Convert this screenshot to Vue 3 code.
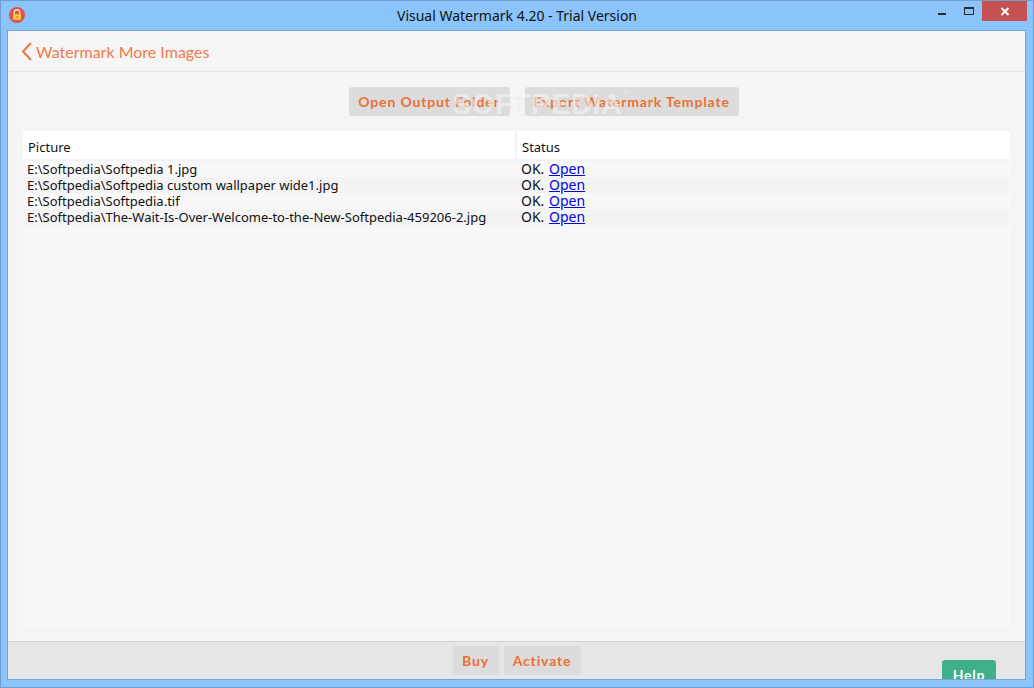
<script setup>
const rows = [
  'E:\\Softpedia\\Softpedia 1.jpg',
  'E:\\Softpedia\\Softpedia custom wallpaper wide1.jpg',
  'E:\\Softpedia\\Softpedia.tif',
  'E:\\Softpedia\\The-Wait-Is-Over-Welcome-to-the-New-Softpedia-459206-2.jpg',
]
</script>

<template>
  <div class="window">
    <div class="titlebar">
      <svg class="appicon" width="16" height="16" viewBox="0 0 16 16">
        <circle cx="8" cy="8" r="8" fill="#e2504f" />
        <path d="M5.2 7.5V5.6a2.8 2.8 0 0 1 5.6 0v1.9" fill="none" stroke="#f5e3b0" stroke-width="1.4" />
        <rect x="4" y="7.2" width="8" height="5.6" fill="#f6c945" />
        <rect x="7.4" y="9" width="1.2" height="2" fill="#b98a20" />
      </svg>
      <div class="title">Visual Watermark 4.20 - Trial Version</div>
      <div class="controls">
        <div class="ctl"><span class="min"></span></div>
        <div class="ctl"><span class="max"></span></div>
        <div class="close">
          <svg width="10" height="9" viewBox="0 0 10 9">
            <path d="M1.5 1l7 7M8.5 1l-7 7" stroke="#fff" stroke-width="2" fill="none" />
          </svg>
        </div>
      </div>
    </div>
    <div class="client">
      <div class="head">
        <svg width="11" height="19" viewBox="0 0 11 19">
          <path d="M10 1L2 9.5 10 18" fill="none" stroke="#ef7440" stroke-width="2" />
        </svg>
        <span class="back">Watermark More Images</span>
      </div>
      <div class="main">
        <div class="actions">
          <button class="btn big wide1">Open Output Folder</button>
          <button class="btn big wide2">Export Watermark Template</button>
          <div class="mark">SOFTPEDIA<sup>®</sup></div>
        </div>
        <div class="panel">
          <div class="thead">
            <div class="c1">Picture</div>
            <div class="c2">Status</div>
          </div>
          <div v-for="(r, i) in rows" :key="r" class="row" :class="{ alt: i % 2 === 1 }">
            <div class="p">{{ r }}</div>
            <div class="s">OK. <a href="#">Open</a></div>
          </div>
        </div>
      </div>
      <div class="foot">
        <button class="btn small b1">Buy</button>
        <button class="btn small b2">Activate</button>
        <div class="help">Help</div>
      </div>
    </div>
  </div>
</template>

<style>
html, body { margin: 0; overflow: hidden; }
</style>

<style scoped>
.window {
  box-sizing: border-box;
  width: 1034px;
  height: 688px;
  background: #8ac4fa;
  border: 1px solid #6f9fd0;
  display: flex;
  flex-direction: column;
  font-family: "Noto Sans", "Open Sans", sans-serif;
  overflow: hidden;
}
.titlebar {
  height: 29px;
  flex: none;
  display: flex;
  align-items: center;
  position: relative;
  box-sizing: border-box;
}
.appicon { margin: -1px 0 0 8px; }
.title {
  position: absolute;
  left: 0;
  right: 0;
  top: 5px;
  text-align: center;
  font: 14px/20px "Noto Sans", sans-serif;
  color: #111;
}
.controls {
  margin-left: auto;
  display: flex;
  align-self: flex-start;
  margin-right: 0;
}
.ctl { width: 30px; height: 20px; position: relative; }
.min { position: absolute; left: 16px; top: 12px; width: 8px; height: 2px; background: #2b2b2b; }
.max { position: absolute; left: 12px; top: 6px; width: 8px; height: 5px; border: 1px solid #2b2b2b; border-top-width: 2px; }
.close {
  width: 45px;
  height: 20px;
  margin-right: 6px;
  background: #c75050;
  display: flex;
  align-items: center;
  justify-content: center;
}
.client {
  flex: 1;
  margin: 0 7px 7px 6px;
  background: #f5f5f5;
  border: 1px solid #74a5d6;
  display: flex;
  flex-direction: column;
  min-height: 0;
}
.head {
  height: 40px;
  flex: none;
  box-sizing: content-box;
  border-bottom: 1px solid #e6e6e6;
  display: flex;
  align-items: center;
  padding-left: 13px;
  gap: 4px;
}
.back {
  font-family: Lato, sans-serif;
  font-size: 16px;
  color: #ef7a4c;
  padding-top: 1px;
}
.main {
  flex: 1;
  display: flex;
  flex-direction: column;
  padding: 15px;
  min-height: 0;
}
.actions {
  display: flex;
  justify-content: center;
  gap: 15px;
  position: relative;
  height: 29px;
  flex: none;
  padding-left: 54px;
}
.btn {
  border: 0;
  border-radius: 3px;
  padding: 0;
  background: #dcdcdc;
  color: #ec6f35;
  font-family: Lato, sans-serif;
  font-weight: 700;
  font-size: 14px;
  letter-spacing: 0.85px;
  height: 29px;
}
.wide1 { width: 161px; }
.wide2 { width: 214px; }
.b1 { width: 46px; }
.b2 { width: 77px; }
.mark {
  position: absolute;
  left: 429px;
  top: 0;
  font: 700 29px/34px "Liberation Sans", sans-serif;
  letter-spacing: 0.5px;
  color: rgba(255, 255, 255, 0.45);
  text-shadow: 0 1px 3px rgba(215, 215, 215, 0.4);
  pointer-events: none;
  white-space: nowrap;
}
.mark sup { font-size: 9px; font-weight: 400; vertical-align: 18px; line-height: 0; }
.panel {
  margin-top: 15px;
  flex: 1;
  background: #f8f8f8;
  min-height: 0;
}
.thead {
  display: flex;
  height: 28px;
  background: #fff;
  border-bottom: 2px solid #f0f3fb;
  font-size: 13px;
  line-height: 32px;
  color: #111;
}
.c1 { width: 494px; box-sizing: border-box; padding-left: 5px; border-right: 2px solid #f0f3fb; height: 30px; }
.c2 { padding-left: 5px; }
.row {
  display: flex;
  height: 16px;
  font-size: 13px;
  line-height: 16px;
  color: #111;
  background: #f8f8f8;
  white-space: nowrap;
}
.row.alt { background: #f3f3f3; }
.p { width: 494px; padding-left: 4px; box-sizing: border-box; }
.s { padding-left: 4px; font-size: 14px; word-spacing: 1px; }
.s a { color: #0000ee; text-decoration: underline; }
.foot {
  height: 33px;
  flex: none;
  background: #e6e6e6;
  border-top: 1px solid #d2d2d2;
  display: flex;
  justify-content: center;
  gap: 5px;
  padding-top: 4px;
  box-sizing: content-box;
  position: relative;
  overflow: hidden;
}
.help {
  position: absolute;
  left: 934px;
  top: 18px;
  width: 54px;
  height: 30px;
  background: #3fb08a;
  border-radius: 3px;
  color: #fff;
  font-family: Lato, sans-serif;
  font-weight: 700;
  font-size: 14px;
  line-height: 30px;
  text-align: center;
  letter-spacing: 0.8px;
}
</style>
